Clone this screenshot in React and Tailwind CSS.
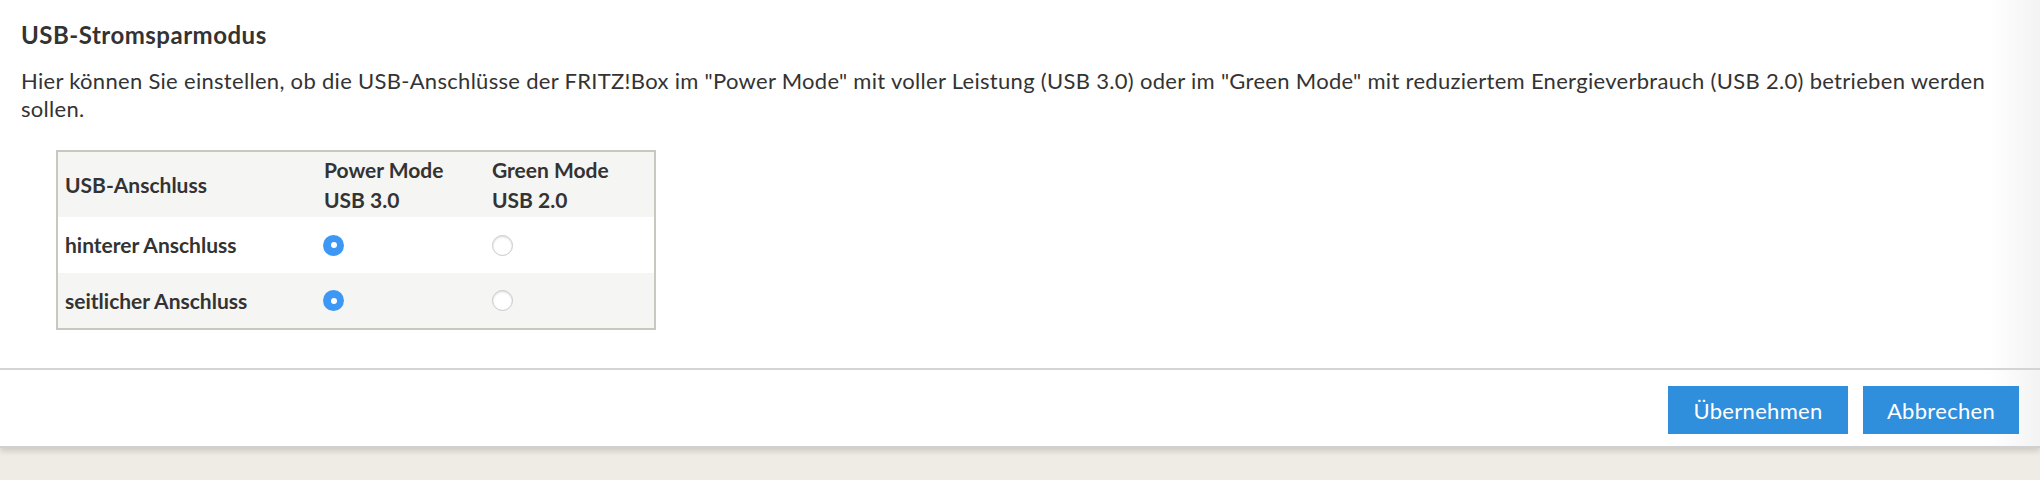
import { useState } from 'react';

const PORTS = [
  { id: 'rear', label: 'hinterer Anschluss' },
  { id: 'side', label: 'seitlicher Anschluss' },
];

function Radio({ checked, onClick }) {
  if (checked) {
    return (
      <button
        type="button"
        onClick={onClick}
        className="flex items-center justify-center w-[21px] h-[21px] rounded-full bg-[#3d98f5]"
      >
        <span className="block w-[6px] h-[6px] rounded-full bg-white" />
      </button>
    );
  }
  return (
    <button
      type="button"
      onClick={onClick}
      className="block w-[21px] h-[21px] rounded-full bg-white border border-[#c9c9c9] shadow-[inset_0_1px_2px_rgba(0,0,0,0.15)]"
    />
  );
}

export default function App() {
  const [modes, setModes] = useState({ rear: 'power', side: 'power' });

  function setMode(port, mode) {
    setModes((prev) => ({ ...prev, [port]: mode }));
  }

  return (
    <div className="min-h-[480px] bg-[#efece5] font-['Lato',sans-serif] text-[#333]">
      <div className="bg-[linear-gradient(90deg,#fff_1990px,#f3f3f3)] border-b-2 border-[#d0d0d0] shadow-[0_3px_6px_rgba(0,0,0,0.15)]">
        <div className="px-[21px] pt-[21px] pb-[38px]">
          <h2 className="text-[24px] leading-[28px] font-bold tracking-[0.5px]">USB-Stromsparmodus</h2>
          <p className="mt-[18px] text-[22px] leading-[28px] tracking-[0.3px]">
            Hier können Sie einstellen, ob die USB-Anschlüsse der FRITZ!Box im "Power Mode" mit voller Leistung (USB 3.0) oder im "Green Mode" mit reduziertem Energieverbrauch (USB 2.0) betrieben werden sollen.
          </p>

          <table className="mt-[27px] ml-[35px] w-[600px] border-2 border-[#c8c8c0] border-collapse text-[21px] font-bold">
            <thead>
              <tr className="h-[66px] bg-[#f5f5f3]">
                <th className="w-[260px] pl-[7px] text-left font-bold leading-[30px]">USB-Anschluss</th>
                <th className="w-[168px] pl-[7px] text-left font-bold leading-[30px]">
                  Power Mode<br />USB 3.0
                </th>
                <th className="pl-[7px] text-left font-bold leading-[30px]">
                  Green Mode<br />USB 2.0
                </th>
              </tr>
            </thead>
            <tbody>
              {PORTS.map((port, i) => (
                <tr key={port.id} className={`h-[56px] ${i % 2 === 1 ? 'bg-[#f5f5f3]' : 'bg-white'}`}>
                  <td className="pl-[7px]">{port.label}</td>
                  <td className="pl-[6px]">
                    <Radio checked={modes[port.id] === 'power'} onClick={() => setMode(port.id, 'power')} />
                  </td>
                  <td className="pl-[7px]">
                    <Radio checked={modes[port.id] === 'green'} onClick={() => setMode(port.id, 'green')} />
                  </td>
                </tr>
              ))}
            </tbody>
          </table>
        </div>

        <div className="flex justify-end gap-[15px] border-t-2 border-[#d4d4d4] px-[21px] pt-[16px] pb-[12px]">
          <button type="button" className="w-[180px] h-[48px] bg-[#2f8fdc] text-white text-[22px] tracking-[0.3px]">
            Übernehmen
          </button>
          <button type="button" className="w-[156px] h-[48px] bg-[#2f8fdc] text-white text-[22px] tracking-[0.3px]">
            Abbrechen
          </button>
        </div>
      </div>
    </div>
  );
}
